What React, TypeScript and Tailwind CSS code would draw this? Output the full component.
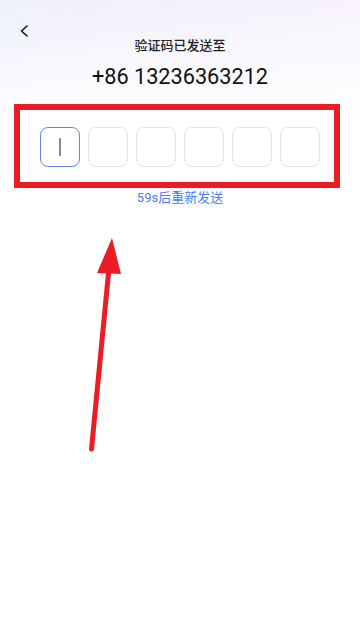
import React from "react";

export default function App() {
  const boxes = [0, 1, 2, 3, 4, 5];
  return (
    <div className="relative w-full h-[619px] overflow-hidden bg-white bg-[linear-gradient(to_bottom,rgba(255,255,255,0)_0px,#ffffff_125px),linear-gradient(to_right,#eef0fb,#f8f3fc)] font-['Roboto','Noto_Sans_CJK_SC',sans-serif]">
      <div className="h-[36px] pt-[25px] pl-[19px]">
        <svg width="10" height="12" viewBox="0 0 10 12" className="block">
          <path d="M8 1 L2.5 6 L8 11" fill="none" stroke="#111" strokeWidth="1.6" strokeLinecap="round" strokeLinejoin="round" />
        </svg>
      </div>
      <div className="text-center text-[13px] leading-[18px] font-medium text-[#222] font-['Noto_Sans_CJK_SC',sans-serif]">
        验证码已发送至
      </div>
      <div className="mt-[9px] text-center text-[21.7px] leading-[28px] text-[#111]">
        +86 13236363212
      </div>
      <div className="mt-[13px] ml-[14px] w-[326px] h-[84px] border-[6px] border-[#ec1c24] bg-white pt-[17px] pl-[20px]">
        <div className="flex gap-[8px]">
          {boxes.map((i) => (
            <div
              key={i}
              className={
                i === 0
                  ? "w-[40px] h-[40px] rounded-[8px] border-[1.5px] border-[#5b87f5] bg-white flex items-center justify-center"
                  : "w-[40px] h-[40px] rounded-[8px] border-[1.5px] border-[#e4e4e4] bg-white"
              }
            >
              {i === 0 && <div className="w-[1.5px] h-[18px] bg-[#8a8a8a]" />}
            </div>
          ))}
        </div>
      </div>
      <div className="mt-[1px] text-center text-[13px] leading-[18px] text-[#4d7cf4] font-['Roboto','Noto_Sans_CJK_SC',sans-serif]">
        59s后重新发送
      </div>
      <svg className="absolute left-0 top-0" width="360" height="619" viewBox="0 0 360 619">
        <line x1="109" y1="268" x2="91.5" y2="449" stroke="#ec1c24" strokeWidth="5" strokeLinecap="round" />
        <polygon points="112,238 97,273 121,274" fill="#ec1c24" />
      </svg>
    </div>
  );
}
